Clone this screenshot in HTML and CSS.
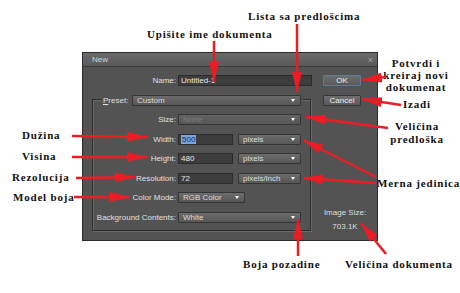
FILE: index.html
```html
<!DOCTYPE html>
<html lang="sr">
<head>
  <meta charset="UTF-8">
  <title>New document dialog</title>
  <link rel="stylesheet" href="styles.css">
</head>
<body>
  <div class="figure">
    <div class="dialog">
      <div class="titlebar"><span>New</span><span class="close">×</span></div>
      <div class="body">
        <div class="main">
          <div class="row">
            <label>Name:</label>
            <div class="field name">Untitled-1</div>
          </div>
          <div class="group">
            <div class="row preset-row">
              <label><u>P</u>reset:</label>
              <div class="select preset">Custom</div>
            </div>
            <div class="row">
              <label>Size:</label>
              <div class="select wide disabled">None</div>
            </div>
            <div class="row">
              <label>Width:</label>
              <div class="field num"><span class="sel">500</span></div>
              <div class="select unit">pixels</div>
            </div>
            <div class="row">
              <label>Height:</label>
              <div class="field num">480</div>
              <div class="select unit">pixels</div>
            </div>
            <div class="row">
              <label>Resolution:</label>
              <div class="field num">72</div>
              <div class="select unit">pixels/inch</div>
            </div>
            <div class="row">
              <label>Color Mode:</label>
              <div class="select mode">RGB Color</div>
            </div>
            <div class="row">
              <label>Background Contents:</label>
              <div class="select wide">White</div>
            </div>
          </div>
        </div>
        <div class="side">
          <button class="btn ok">OK</button>
          <button class="btn cancel">Cancel</button>
          <div class="size-info">
            <div>Image Size:</div>
            <div>703.1K</div>
          </div>
        </div>
      </div>
    </div>

    <div class="note n-name">Upišite ime dokumenta</div>
    <div class="note n-list">Lista sa predlošcima</div>
    <div class="note n-ok">Potvrdi i<br>kreiraj novi<br>dokumenat</div>
    <div class="note n-cancel">Izađi</div>
    <div class="note n-size">Veličina<br>predloška</div>
    <div class="note n-unit">Merna jedinica</div>
    <div class="note n-width">Dužina</div>
    <div class="note n-height">Visina</div>
    <div class="note n-res">Rezolucija</div>
    <div class="note n-mode">Model boja</div>
    <div class="note n-bg">Boja pozadine</div>
    <div class="note n-imgsize">Veličina dokumenta</div>

    <svg class="arrows" width="460" height="293" viewBox="0 0 460 293">
      <defs>
        <marker id="head" markerUnits="userSpaceOnUse" markerWidth="20" markerHeight="10" refX="20" refY="5" orient="auto">
          <path d="M0 0 L20 5 L0 10 Z" fill="#ec1c24"/>
        </marker>
      </defs>
      <g stroke="#ec1c24" stroke-width="2.5" marker-end="url(#head)">
        <line x1="214" y1="41" x2="214" y2="82"/>
        <line x1="297" y1="24" x2="297" y2="92"/>
        <line x1="386" y1="77" x2="362" y2="80"/>
        <line x1="401" y1="105" x2="362" y2="99"/>
        <line x1="388" y1="128" x2="306" y2="117"/>
        <line x1="376" y1="177" x2="303" y2="140"/>
        <line x1="376" y1="183" x2="303" y2="178"/>
        <line x1="72" y1="136" x2="147" y2="137"/>
        <line x1="72" y1="157" x2="147" y2="157"/>
        <line x1="76" y1="178" x2="135" y2="177"/>
        <line x1="74" y1="197" x2="130" y2="197"/>
        <line x1="298" y1="256" x2="298" y2="219"/>
        <line x1="386" y1="254" x2="361" y2="223"/>
      </g>
    </svg>
  </div>
</body>
</html>
```

FILE: styles.css
```css
body {
  margin: 0;
  font-family: "Liberation Sans", Arial, sans-serif;
  background: #fff;
}

.figure {
  position: relative;
  width: 460px;
  height: 293px;
  padding: 52px 0 0 82px;
  box-sizing: border-box;
  overflow: hidden;
}

.dialog {
  width: 296px;
  box-sizing: border-box;
  border: 1px solid #2b2b2b;
  background: #535353;
  font-size: 8px;
  color: #e0e0e0;
}

.titlebar {
  height: 14px;
  display: flex;
  align-items: center;
  justify-content: space-between;
  padding: 0 4px 0 9px;
  background: linear-gradient(#6a6a6a, #5a5a5a);
  border-bottom: 1px solid #3c3c3c;
  color: #d4d4d4;
  box-sizing: border-box;
}

.close {
  font-size: 9px;
  color: #a8a8a8;
}

.body {
  display: flex;
}

.main {
  width: 230px;
  padding: 8px 0 9px 9px;
  box-sizing: border-box;
}

.row {
  display: flex;
  align-items: center;
  height: 11px;
  margin-top: 8.5px;
}

.main > .row:first-child {
  margin-top: 0;
}

.row label {
  width: 84px;
  margin-right: 2px;
  text-align: right;
  white-space: nowrap;
}

.group {
  margin-top: 13px;
  width: 219px;
  border: 1px solid #2e2e2e;
  box-shadow: 1px 1px 0 #686868, inset 1px 1px 0 #686868;
  padding-bottom: 7px;
  box-sizing: border-box;
}

.group .row label {
  width: 83px;
}

.group .preset-row {
  margin: -5.5px 0 0 9px;
  width: 201px;
  background: #535353;
}

.group .preset-row label {
  width: 30px;
  margin: 0;
  padding-left: 1px;
  text-align: left;
  box-sizing: border-box;
}

.field {
  height: 11px;
  box-sizing: border-box;
  background: #3d3d3d;
  border: 1px solid #2c2c2c;
  padding-left: 2px;
  line-height: 9px;
  color: #e8e8e8;
}

.field.name {
  width: 134px;
}

.field.num {
  width: 55px;
}

.sel {
  background: #7ba3dd;
  color: #13306a;
  padding: 0 1px;
}

.select {
  position: relative;
  height: 11px;
  box-sizing: border-box;
  border: 1px solid #353535;
  border-radius: 1px;
  background: linear-gradient(#6c6c6c, #575757);
  padding-left: 4px;
  line-height: 9px;
  color: #dcdcdc;
}

.select::after {
  content: "";
  position: absolute;
  right: 5px;
  top: 3px;
  border-left: 2.5px solid transparent;
  border-right: 2.5px solid transparent;
  border-top: 3px solid #fff;
}

.select.preset {
  width: 169px;
}

.select.wide {
  width: 123px;
}

.select.unit {
  width: 63px;
  margin-left: 5px;
}

.select.mode {
  width: 67px;
}

.select.disabled {
  color: #7e7e7e;
  background: linear-gradient(#626262, #575757);
}

.side {
  width: 64px;
  padding: 8px 0 6px 10px;
  box-sizing: border-box;
  display: flex;
  flex-direction: column;
  align-items: flex-start;
}

.btn {
  width: 38px;
  height: 11px;
  padding: 0;
  border: 1px solid #363636;
  border-radius: 1px;
  background: linear-gradient(#6e6e6e, #5a5a5a);
  color: #eee;
  font-family: "Liberation Sans", Arial, sans-serif;
  font-size: 8px;
  line-height: 9px;
}

.btn.ok {
  border-color: #5d7c9b;
}

.btn.cancel {
  margin-top: 9px;
}

.size-info {
  margin-top: auto;
  width: 44px;
  text-align: center;
  line-height: 14px;
  white-space: nowrap;
  color: #dedede;
}

.note {
  position: absolute;
  font-family: "Liberation Serif", "Times New Roman", serif;
  font-weight: bold;
  font-size: 11px;
  letter-spacing: 0.8px;
  line-height: 12px;
  color: #111;
  white-space: nowrap;
}

.n-name { left: 147px; top: 28px; }
.n-list { left: 248px; top: 10px; }
.n-ok { left: 383px; top: 57px; width: 66px; text-align: center; }
.n-cancel { left: 403px; top: 98px; }
.n-size { left: 388px; top: 120px; width: 58px; text-align: center; line-height: 13px; }
.n-unit { left: 377px; top: 177px; }
.n-width { left: 22px; top: 129px; }
.n-height { left: 22px; top: 150px; }
.n-res { left: 12px; top: 171px; }
.n-mode { left: 13px; top: 191px; }
.n-bg { left: 243px; top: 258px; }
.n-imgsize { left: 345px; top: 258px; }

.arrows {
  position: absolute;
  left: 0;
  top: 0;
  pointer-events: none;
}
```
